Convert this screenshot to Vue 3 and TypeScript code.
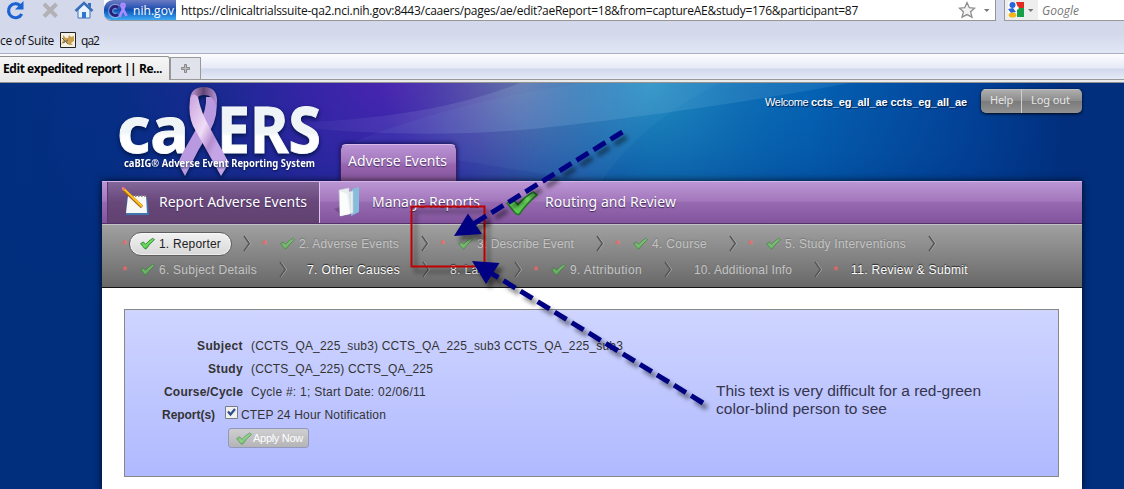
<script setup lang="ts">
import type { Directive } from 'vue'

interface Step {
  label: string
  width: number
  required?: boolean
  done?: boolean
  state?: 'active' | 'open'
}

// Tracks a label so that it fills the given width exactly.
const vFit: Directive<HTMLElement, number> = {
  mounted(el, { value }) {
    const natural = el.getBoundingClientRect().width
    const count = (el.textContent ?? '').length
    el.style.letterSpacing = `${(value - natural) / count}px`
  },
}

const rows: Step[][] = [
  [
    { label: '1. Reporter', width: 62, required: true, done: true, state: 'active' },
    { label: '2. Adverse Events', width: 100, required: true, done: true },
    { label: '3. Describe Event', width: 97, required: true, done: true },
    { label: '4. Course', width: 55, required: true, done: true },
    { label: '5. Study Interventions', width: 121, required: true, done: true },
  ],
  [
    { label: '6. Subject Details', width: 98, required: true, done: true },
    { label: '7. Other Causes', width: 93, state: 'open' },
    { label: '8. Labs', width: 42, state: 'open' },
    { label: '9. Attribution', width: 72, required: true, done: true },
    { label: '10. Additional Info', width: 98 },
    { label: '11. Review & Submit', width: 117, required: true, state: 'open' },
  ],
]
</script>

<template>
  <div class="screen">
    <svg class="defs" width="0" height="0">
      <defs>
        <linearGradient id="green" x1="0" y1="0" x2="1" y2="1">
          <stop offset="0" stop-color="#2fae2f" /><stop offset=".5" stop-color="#6fe05f" /><stop offset="1" stop-color="#128a18" />
        </linearGradient>
        <symbol id="check" viewBox="0 0 16 13">
          <path d="M.6 6.600 3.600 4.800 6 7.400Q9.500 3.200 13.600 1L15.500 2.400Q10 7 6.800 12Q5.800 12.600 4.800 11.700Z" fill="url(#green)" stroke="#23752a" stroke-width=".8" />
        </symbol>
      </defs>
    </svg>

    <div class="toolbar">
      <svg class="nav-icons" width="104" height="21" viewBox="0 0 104 21">
        <path d="M20.500 5.800A7 7 0 1 0 21.700 14" fill="none" stroke="#1d62d2" stroke-width="3.200" />
        <path d="M23.500 1V9.500H15Z" fill="#1d62d2" />
        <path d="M44 4 56.500 16.500M56.500 4 44 16.500" stroke="#b2b2b4" stroke-width="4" />
        <path d="M78 10V18H90V10L84 4Z" fill="#e8f3ff" stroke="#3e72bb" />
        <path d="M75.500 11 84 3 92.500 11" fill="none" stroke="#376fbd" stroke-width="2.500" />
        <path d="M88 3H91V8L88 5Z" fill="#376fbd" />
        <path d="M82 12H86V18H82Z" fill="#2d78ce" />
      </svg>
      <div class="address">
        <div class="identity">
          <svg width="27" height="20" viewBox="0 0 27 20">
            <path d="M14 7.500A4.500 4.500 0 1 0 14 14.500" fill="none" stroke="#fff" stroke-opacity=".35" stroke-width="5.500" />
            <path d="M14 7.500A4.500 4.500 0 1 0 14 14.500" fill="none" stroke="#29207b" stroke-width="3" />
            <path d="M15.500 17 20.500 6C21.500 3 16.500 3 17.500 6L22.500 16" fill="none" stroke="#ad8aff" stroke-width="2.700" />
          </svg>
          <span v-fit="41">nih.gov</span>
        </div>
        <span v-fit="677" class="url">https://clinicaltrialssuite-qa2.nci.nih.gov:8443/caaers/pages/ae/edit?aeReport=18&amp;from=captureAE&amp;study=176&amp;participant=87</span>
        <svg class="star-icon" width="37" height="20" viewBox="0 0 37 20">
          <path d="M9 2.500 11.300 7.700 16.500 8.200 12.600 11.800 14 17.200 9 14.600 4 17.200 5.400 11.800 1.500 8.200 6.700 7.700Z" fill="#f2f2f2" stroke="#8d8d8d" stroke-width="1.300" />
          <path d="M26 9H31.500L28.700 12Z" fill="#777" />
        </svg>
      </div>
      <div class="search">
        <div class="engine">
          <svg width="32" height="20" viewBox="0 0 32 20">
            <path d="M3 2H19V17H3Z" fill="#fff" /><path d="M11 2H19V8H13Z" fill="#e02b20" /><path d="M12 8H19V17H12Z" fill="#16a04a" />
            <circle cx="7.500" cy="5" r="3" fill="#2864dc" /><path d="M3 9 8 8 11 12 6 13Z" fill="#2864dc" />
            <ellipse cx="7.500" cy="15" rx="4" ry="2.500" fill="#f4b41b" /><circle cx="12" cy="8" r="1.800" fill="#fff" />
            <path d="M23 9H28.500L25.700 12Z" fill="#777" />
          </svg>
        </div>
        <span v-fit="37" class="hint">Google</span>
      </div>
    </div>

    <div class="bookmarks">
      <span v-fit="54">ce of Suite</span>
      <svg width="16" height="16" viewBox="0 0 16 16">
        <path d="M.5 .5H15.500V15.500H.5Z" fill="#f4f2e5" stroke="#222" />
        <path d="M3 3 6 6H8L9 3 11 5 14 4V9L11 11 13 13H9L6 10 3 11 1 13 3 8Z" fill="#caa04e" />
        <path d="M2 6 8 12M3 11 8 8" stroke="#69645b" />
      </svg>
      <span v-fit="18">qa2</span>
    </div>

    <div class="tabs">
      <div class="tab"><span v-fit="159">Edit expedited report || Re...</span></div>
      <div class="new-tab"><svg width="9" height="9" viewBox="0 0 9 9"><path d="M3.500 .5H5.500V3.500H8.500V5.500H5.500V8.500H3.500V5.500H.5V3.500H3.500Z" fill="#bbb" stroke="#777" stroke-width=".8" /></svg></div>
    </div>

    <div class="page">
      <svg class="backdrop" width="1124" height="406" viewBox="0 0 1124 406">
        <defs>
          <linearGradient id="sweep" x1="0" x2="1">
            <stop offset="0" stop-color="#012f7f" /><stop offset=".1" stop-color="#062e85" /><stop offset=".27" stop-color="#2b259c" /><stop offset=".37" stop-color="#3029a6" /><stop offset=".46" stop-color="#2444a6" /><stop offset=".58" stop-color="#0b60ab" /><stop offset=".72" stop-color="#0562b3" /><stop offset=".86" stop-color="#024399" /><stop offset=".95" stop-color="#012e7d" />
          </linearGradient>
          <linearGradient id="dusk" x1="0" y1="0" x2="0" y2="1">
            <stop offset="0" stop-color="#012e7d" stop-opacity="0" /><stop offset=".3" stop-color="#012e7d" stop-opacity=".15" /><stop offset="1" stop-color="#012e7d" />
          </linearGradient>
          <radialGradient id="violet" gradientUnits="userSpaceOnUse" cx="390" cy="-10" r="170">
            <stop offset="0" stop-color="#5224b4" stop-opacity=".8" /><stop offset="1" stop-color="#3424b0" stop-opacity="0" />
          </radialGradient>
          <radialGradient id="haze" gradientUnits="userSpaceOnUse" cx="520" cy="-5" r="140">
            <stop offset="0" stop-color="#a490a4" stop-opacity=".6" /><stop offset="1" stop-color="#6d75b0" stop-opacity="0" />
          </radialGradient>
          <radialGradient id="cyan" gradientUnits="userSpaceOnUse" cx="650" cy="0" r="180">
            <stop offset="0" stop-color="#30a6cc" stop-opacity=".65" /><stop offset="1" stop-color="#0872b8" stop-opacity="0" />
          </radialGradient>
          <linearGradient id="sheen" x1="0" x2="1"><stop offset="0" stop-color="#fff" stop-opacity="0" /><stop offset=".45" stop-color="#a9d2f5" stop-opacity=".17" /><stop offset="1" stop-color="#8ac9e8" stop-opacity=".12" /></linearGradient>
        </defs>
        <rect width="1124" height="406" fill="#012e7d" />
        <rect width="1124" height="230" fill="url(#sweep)" />
        <rect width="1124" height="230" fill="url(#dusk)" />
        <rect width="1124" height="200" fill="url(#violet)" />
        <rect width="1124" height="200" fill="url(#haze)" />
        <rect width="1124" height="200" fill="url(#cyan)" />
        <path d="M260 40Q420 60 560 43Q710 26 850 0H520Q420 40 260 40Z" fill="url(#sheen)" />
        <path d="M350 60Q450 20 580 0H720Q640 40 600 100Z" fill="#8fd4f0" opacity=".06" />
      </svg>

      <header class="masthead">
        <svg class="logo" width="212" height="98" viewBox="0 0 212 98">
          <defs>
            <linearGradient id="silver" x1="0" y1="0" x2="0" y2="1"><stop offset="0" stop-color="#edf3f6" /><stop offset=".55" stop-color="#eff4f7" /><stop offset=".6" stop-color="#fff" /></linearGradient>
            <linearGradient id="silk" x1="0" y1="0" x2="1" y2="1"><stop offset="0" stop-color="#c9a2dd" /><stop offset=".38" stop-color="#f0dcf6" /><stop offset=".56" stop-color="#b48dd0" /><stop offset=".66" stop-color="#c5a5e6" /><stop offset="1" stop-color="#c3a3e6" /></linearGradient>
            <linearGradient id="loop" x1="0" x2="1"><stop offset="0" stop-color="#c79bd9" /><stop offset=".5" stop-color="#604574" /><stop offset="1" stop-color="#b793d8" /></linearGradient>
          </defs>
          <g class="logo-art">
            <text class="word" x="2" y="70" textLength="72" lengthAdjust="spacingAndGlyphs" fill="url(#silver)">ca</text>
            <text class="word" x="102" y="70" textLength="104" lengthAdjust="spacingAndGlyphs" fill="url(#silver)">ERS</text>
            <path d="M101 14Q104 32 95 48L84 66 70 93 63 80 67 71 84 41Q92 26 91 14Z" fill="#b99ae0" />
            <path d="M75 18Q75 4 89 4Q102 4 102 18L101 24Q99 12 89 12Q80 12 79 24Z" fill="url(#loop)" />
            <path d="M75 16Q73 32 78 43L106 93 114 80 95 45Q86 30 83 14Q78 8 75 16Z" fill="url(#silk)" />
          </g>
          <text class="tagline" x="9" y="84" textLength="191" lengthAdjust="spacingAndGlyphs">caBIG® Adverse Event Reporting System</text>
        </svg>
        <div class="section-tab"><span v-fit="99">Adverse Events</span></div>
        <div class="account">
          <span class="welcome"><span v-fit="46">Welcome </span><b v-fit="156">ccts_eg_all_ae ccts_eg_all_ae</b></span>
          <div class="buttons">
            <span class="help"><span v-fit="23">Help</span></span>
            <span class="logout"><span v-fit="39">Log out</span></span>
          </div>
        </div>
      </header>

      <main class="sheet">
        <nav class="menu">
          <div class="menu-item current">
            <svg width="32" height="32" viewBox="0 0 32 32">
              <path d="M5 10 25 10 27 28 4 28Z" fill="#3f76ae" /><path d="M6 9 24 9 25 26 4 26Z" fill="#f7f7f5" />
              <path d="M7 9H24" stroke="#888" stroke-width="2" stroke-dasharray="1.500 1.500" />
              <path d="M2 3 20 20" stroke="#a75e12" stroke-width="3.200" /><path d="M2.500 2.500 20 19.500" stroke="#ffc31c" stroke-width="2" /><path d="M0 .5 2.500 3" stroke="#ef7f6b" stroke-width="3" />
            </svg>
            <span v-fit="148">Report Adverse Events</span>
          </div>
          <div class="menu-item manage">
            <svg width="32" height="32" viewBox="0 0 32 32">
              <path d="M1 23 7 28 9 20Z" fill="#442b60" opacity=".35" />
              <path d="M19 3 26 1V26L18 30Z" fill="#86bddd" /><path d="M6 4 16 2V6L20 5 20 27 7 30Z" fill="#e8edee" stroke="#c3d1d8" stroke-width=".6" /><path d="M7 5 14 8 17 28 7 30Z" fill="#fbfcfc" /><path d="M16 8 18 5V27Z" fill="#d5e2e8" />
            </svg>
            <span v-fit="108">Manage Reports</span>
          </div>
          <div class="menu-item routing">
            <svg width="32" height="26" viewBox="0 0 16 13"><use href="#check" /></svg>
            <span v-fit="131">Routing and Review</span>
          </div>
        </nav>

        <div class="steps">
          <div v-for="(row, r) in rows" :key="r" class="step-row">
            <template v-for="(step, i) in row" :key="step.label">
              <span v-if="step.required" class="required">*</span>
              <span class="step" :class="[step.state, { optional: !step.required && !(r === 1 && i === 4) }]">
                <svg v-if="step.done" class="tick" width="15" height="13"><use href="#check" /></svg>
                <span v-fit="step.width">{{ step.label }}</span>
              </span>
              <svg v-if="r === 0 || i < row.length - 1" class="chevron" width="8" height="17" viewBox="0 0 8 17">
                <path d="M2 1 7.500 8.500 2 16" fill="none" stroke="#b4b4b4" /><path d="M1 1 6.300 8.500 1 16" fill="none" stroke="#555" stroke-width="1.400" />
              </svg>
            </template>
          </div>
        </div>

        <section class="summary">
          <div class="field"><b><span v-fit="46">Subject</span></b><span v-fit="372">(CCTS_QA_225_sub3) CCTS_QA_225_sub3 CCTS_QA_225_sub3</span></div>
          <div class="field"><b><span v-fit="35">Study</span></b><span v-fit="182">(CCTS_QA_225) CCTS_QA_225</span></div>
          <div class="field"><b><span v-fit="79">Course/Cycle</span></b><span v-fit="175">Cycle #: 1; Start Date: 02/06/11</span></div>
          <div class="field reports">
            <b><span v-fit="53">Report(s)</span></b>
            <svg width="13" height="13" viewBox="0 0 13 13"><path d="M.5 .5H12.500V12.500H.5Z" fill="#f1f1ef" stroke="#777d87" /><path d="M3 5.500 5.500 8.500 10 3" fill="none" stroke="#304b8c" stroke-width="2.200" /></svg>
            <span v-fit="145">CTEP 24 Hour Notification</span>
          </div>
          <div class="apply"><svg class="tick" width="16" height="13"><use href="#check" /></svg><span v-fit="50">Apply Now</span></div>
        </section>
      </main>
    </div>

    <svg class="markup" width="1124" height="489" viewBox="0 0 1124 489">
      <g class="shaded">
        <rect x="411.500" y="206.500" width="73" height="60" fill="none" stroke="#c00000" stroke-width="2" />
      </g>
      <g class="shaded" fill="#000082" stroke="#000082">
        <path d="M622.500 132 470 226" stroke-width="5" stroke-dasharray="14 6" />
        <path d="M454 236 468 213.500 482 234Z" stroke="none" />
        <path d="M703 403 486 270" stroke-width="5" stroke-dasharray="14 6" />
        <path d="M472 261 499.500 263 486 284Z" stroke="none" />
      </g>
    </svg>
    <div class="note"><span v-fit="265">This text is very difficult for a red-green</span><br><span v-fit="171">color-blind person to see</span></div>
  </div>
</template>

<style>
body { margin: 0; overflow: hidden; }
</style>

<style scoped>
.screen { position: relative; width: 1124px; height: 489px; overflow: hidden; font: 12px "Liberation Sans", Arial, sans-serif; color: #333; white-space: pre; }
.defs { position: absolute; }
svg { display: block; flex: none; }
.toolbar { display: flex; height: 21px; background: #d3d9eb; font: 12px/22px "Open Sans", sans-serif; color: #111; }
.address { display: flex; box-sizing: border-box; width: 892px; height: 21px; background: #fff; border-bottom: 1px solid #969696; border-right: 1px solid #969696; border-radius: 0 0 0 7px; }
.identity { display: flex; width: 72px; height: 20px; color: #fff; background: linear-gradient(#6b7bc4, #2050b0 45%, #0b50b5 50%, #3eaaf5); border-radius: 9px 0 0 7px; }
.identity svg { margin-right: 2px; }
.url { margin-left: 5px; }
.star-icon { margin-left: auto; }
.search { display: flex; flex: 1; margin-left: 8px; height: 20px; background: #fff; border-left: 1px solid #999; border-bottom: 1px solid #999; }
.engine { width: 33px; background: #eee; }
.hint { font-style: italic; color: #777; margin-left: 4px; }
.bookmarks { display: flex; align-items: center; box-sizing: border-box; height: 33px; padding-top: 7px; padding-bottom: 2px; background: linear-gradient(#d3d9eb 40%, #e2e7f5); border-bottom: 1px solid #a9afc0; font: 12px/18px "Open Sans", sans-serif; color: #111; }
.bookmarks span { padding-top: 3px; }
.bookmarks svg { margin: 0 5px 0 6px; }
.tabs { display: flex; align-items: flex-end; box-sizing: border-box; height: 29px; padding-bottom: 3px; background: linear-gradient(#fdfdff 0, #e6eaf6 14px, #d1d8ed 15px, #e5eaf6 25px, #999 25px, #999 26px, #eaeaea 26px, #eaeaea 28px, #929290 28px); }
.tab { box-sizing: border-box; width: 170px; height: 24px; padding-left: 3px; border: 1px solid #919191; border-width: 1px 1px 0 0; border-radius: 0 3px 0 0; background: linear-gradient(#f6f6f6, #e9e9e9); font: bold 12px/24px "Open Sans", sans-serif; color: #000; }
.new-tab { display: grid; place-items: center; box-sizing: border-box; width: 31px; height: 23px; border: 1px solid #999; background: #e0e3ec; }
.page { position: relative; height: 406px; }
.backdrop { position: absolute; inset: 0; }
.masthead { position: relative; display: flex; height: 98px; padding-left: 115px; }
.logo { overflow: visible; }
.logo-art { filter: drop-shadow(0 2px 2px #001344); }
.word { font: bold 65px "Noto Sans", sans-serif; stroke: #f6f9fb; stroke-width: 1px; }
.tagline { font: bold 10.500px "Noto Sans", sans-serif; fill: #fff; filter: drop-shadow(0 1px 1px #001344); }
.section-tab { box-sizing: border-box; align-self: flex-end; width: 117px; height: 37px; margin-left: 13px; padding-left: 7px; border: 1px solid #3b1f68; border-top: 1px solid #d9bae9; border-bottom: 0; border-radius: 6px 6px 0 0; box-shadow: 0 -1px 4px #15104e; background: linear-gradient(#ba95d5, #a477bd 45%, #9665ae 55%, #87569f); color: #fff; font: 14px/32px "Noto Sans", sans-serif; text-shadow: 0 1px 1px #4b2d67; }
.account { display: flex; margin-left: 308px; padding-top: 6px; color: #fff; }
.welcome { font-size: 11px; line-height: 26px; text-shadow: 1px 1px 1px #001846; width: 216px; }
.buttons { display: flex; height: 24px; border-radius: 5px; box-shadow: 0 1px 3px #000d; overflow: hidden; background: linear-gradient(#b0b0b0, #8d8d8d 48%, #7b7b7b 52%, #929292); font: 11px/20px "Noto Sans", sans-serif; color: #e5e5e5; }
.buttons > span { box-sizing: border-box; padding-left: 9px; border-top: 1px solid #bbb; }
.help { width: 41px; border-right: 1px solid #d0d0d0; }
.logout { width: 60px; }
.sheet { position: relative; width: 980px; height: 308px; margin-left: 102px; background: #fff; box-shadow: 0 0 7px #000c; }
.menu { display: flex; box-sizing: border-box; height: 43px; border-top: 1px solid #d7b4e8; border-bottom: 1px solid #553069; background: linear-gradient(#bb96d4, #a276bb 47%, #966ab0 49%, #83549e); color: #fff; font: 14px/40px "Noto Sans", sans-serif; text-shadow: 0 1px 1px #3d2457; }
.menu-item { display: flex; }
.current { box-sizing: border-box; width: 212px; margin-left: 5px; padding-left: 14px; border-left: 1px solid #573574; background: linear-gradient(#83669a, #68477a 49%, #60416f); }
.current svg { margin: 5px 5px 0 0; }
.manage { box-sizing: border-box; width: 187px; padding-left: 13px; border-left: 1px solid #dfc5ef; }
.manage svg { margin: 4px 7px 0 0; }
.routing svg { margin: 8px 7px 0 0; }
.steps { box-sizing: border-box; height: 64px; padding: 7px 0 0 20px; border-top: 1px solid #c5c0c7; border-bottom: 1px solid #151515; background: linear-gradient(#a0a0a0, #686868); }
.step-row { display: flex; height: 24px; margin-bottom: 2px; }
.required { width: 7px; color: #ff6262; font-size: 13px; line-height: 25px; }
.step { display: flex; box-sizing: border-box; height: 24px; padding: 0 10px; border: 1px solid transparent; color: #c4c4c4; text-shadow: 0 -1px 1px #6669; line-height: 22px; }
.step.optional { margin-left: -2px; }
.step.open { color: #fff; text-shadow: 0 -1px 1px #222; }
.step.active { color: #222; text-shadow: none; border-color: #5f5f5f; border-radius: 12px; background: linear-gradient(#f1f1f1, #d8d8d8); box-shadow: inset 0 0 0 1px #fff8; }
.tick { margin: 4px 4px 0 0; opacity: .6; }
.active .tick { opacity: 1; }
.chevron { margin: 3px 11px 0 11px; }
.summary { box-sizing: border-box; width: 935px; height: 168px; margin: 21px 0 0 22px; padding-top: 24px; border: 1px solid #888; background: linear-gradient(#cfd5ff, #b0b9ff); }
.field { display: flex; height: 23px; line-height: 24px; }
.field b { width: 118px; margin-right: 8px; text-align: right; }
.field.reports b { width: 90px; margin-right: 10px; }
.reports svg { margin: 3px 3px 0 0; }
.apply { display: flex; box-sizing: border-box; width: 81px; height: 20px; margin: 2px 0 0 103px; padding-left: 7px; border: 1px solid #9298bd; border-radius: 3px; background: linear-gradient(#cfcfd1, #b5b5b7); color: #fff; font-size: 11px; line-height: 19px; }
.apply .tick { margin: 3px 1px 0 0; }
.markup { position: absolute; inset: 0; }
.shaded { filter: drop-shadow(4px 5px 2px #0007); }
.note { position: absolute; left: 716px; top: 382px; font-size: 15.500px; line-height: 18px; color: #35354d; }
</style>
